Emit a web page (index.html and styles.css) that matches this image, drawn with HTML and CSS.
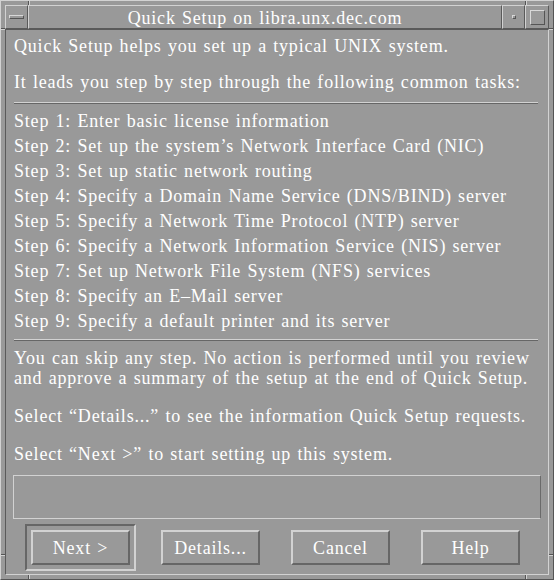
FILE: index.html
```html
<!DOCTYPE html>
<html>
<head>
<meta charset="utf-8">
<title>Quick Setup</title>
<link rel="stylesheet" href="styles.css">
</head>
<body>
<div class="window">
  <span class="tick tick-top tick-l"></span>
  <span class="tick tick-top tick-r"></span>
  <span class="tick tick-bottom tick-l"></span>
  <span class="tick tick-bottom tick-r"></span>
  <span class="tick tick-left tick-t"></span>
  <span class="tick tick-left tick-b"></span>
  <span class="tick tick-right tick-t"></span>
  <span class="tick tick-right tick-b"></span>

  <div class="titlebar">
    <div class="tb-btn tb-menu"><span class="menu-glyph"></span></div>
    <div class="tb-title">Quick Setup on libra.unx.dec.com</div>
    <div class="tb-btn tb-min"><span class="min-glyph"></span></div>
    <div class="tb-btn tb-max"><span class="max-glyph"></span></div>
  </div>

  <div class="content">
    <p class="line intro">Quick Setup helps you set up a typical UNIX system.</p>
    <p class="line lead">It leads you step by step through the following common tasks:</p>
    <div class="sep sep-1"></div>
    <ul class="steps">
      <li>Step 1: Enter basic license information</li>
      <li>Step 2: Set up the system’s Network Interface Card (NIC)</li>
      <li>Step 3: Set up static network routing</li>
      <li>Step 4: Specify a Domain Name Service (DNS/BIND) server</li>
      <li>Step 5: Specify a Network Time Protocol (NTP) server</li>
      <li>Step 6: Specify a Network Information Service (NIS) server</li>
      <li>Step 7: Set up Network File System (NFS) services</li>
      <li>Step 8: Specify an E–Mail server</li>
      <li>Step 9: Specify a default printer and its server</li>
    </ul>
    <div class="sep sep-2"></div>
    <p class="line skip">You can skip any step. No action is performed until you review<br>and approve a summary of the setup at the end of Quick Setup.</p>
    <p class="line details">Select “Details...” to see the information Quick Setup requests.</p>
    <p class="line next">Select “Next &gt;” to start setting up this system.</p>
    <div class="status"></div>
    <div class="buttons">
      <div class="default-frame"><button class="btn">Next &gt;</button></div>
      <button class="btn">Details...</button>
      <button class="btn">Cancel</button>
      <button class="btn">Help</button>
    </div>
  </div>
</div>
</body>
</html>
```
FILE: styles.css
```css
html, body {
  margin: 0;
  padding: 0;
  background: #999999;
}

.window {
  position: relative;
  box-sizing: border-box;
  width: 554px;
  height: 580px;
  padding: 4px;
  background: #999999;
  border: 1px solid;
  border-color: #d2d2d2 #555555 #555555 #d2d2d2;
  display: flex;
  flex-direction: column;
  font-family: "Liberation Serif", "DejaVu Serif", serif;
  font-size: 18px;
  letter-spacing: 0.8px;
  word-spacing: 1px;
  color: #ffffff;
}

.tick {
  position: absolute;
  background: #555555;
}
.tick-top, .tick-bottom { width: 1px; height: 4px; }
.tick-top { top: 0; }
.tick-bottom { bottom: 0; }
.tick-top.tick-l, .tick-bottom.tick-l { left: 27px; box-shadow: 1px 0 0 #d2d2d2; }
.tick-top.tick-r, .tick-bottom.tick-r { left: 524px; box-shadow: 1px 0 0 #d2d2d2; }
.tick-left, .tick-right { height: 1px; width: 4px; }
.tick-left { left: 0; }
.tick-right { right: 0; }
.tick-left.tick-t, .tick-right.tick-t { top: 27px; box-shadow: 0 1px 0 #d2d2d2; }
.tick-left.tick-b, .tick-right.tick-b { top: 553px; box-shadow: 0 1px 0 #d2d2d2; }

.titlebar {
  display: flex;
  height: 24px;
  flex: none;
}

.tb-btn, .tb-title {
  box-sizing: border-box;
  height: 24px;
  border: 1px solid;
  border-color: #d2d2d2 #5a5a5a #5a5a5a #d2d2d2;
  display: flex;
  align-items: center;
  justify-content: center;
}

.tb-menu { width: 23px; }
.tb-title {
  flex: 1;
  font-size: 18px;
  line-height: 20px;
  padding-top: 1px;
}
.tb-min { width: 23px; }
.tb-max { width: 24px; }

.menu-glyph {
  box-sizing: border-box;
  width: 15px;
  height: 4px;
  border: 1px solid;
  border-color: #d8d8d8 #555555 #555555 #d8d8d8;
}

.min-glyph {
  box-sizing: border-box;
  width: 4px;
  height: 4px;
  border: 1px solid;
  border-color: #d8d8d8 #555555 #555555 #d8d8d8;
}

.max-glyph {
  box-sizing: border-box;
  width: 15px;
  height: 15px;
  border: 1px solid;
  border-color: #d8d8d8 #555555 #555555 #d8d8d8;
}

.content {
  flex: 1;
  box-sizing: border-box;
  border: 1px solid;
  border-color: #5a5a5a #d2d2d2 #d2d2d2 #5a5a5a;
  padding: 6px 0 0 8px;
  display: flex;
  flex-direction: column;
}

.line {
  margin: 0;
  line-height: 20px;
  white-space: nowrap;
}

.lead { margin-top: 16px; }

.sep {
  height: 1px;
  background: #d2d2d2;
  border-bottom: 1px solid #666666;
  margin-right: 10px;
  flex: none;
}
.sep-1 { margin-top: 10px; }
.sep-2 { margin-top: 5px; }

.steps {
  list-style: none;
  margin: 5px 0 0 0;
  padding: 0;
}
.steps li {
  line-height: 25px;
  height: 25px;
  white-space: nowrap;
}

.skip { margin-top: 7px; }
.details { margin-top: 18px; }
.next { margin-top: 18px; }

.status {
  box-sizing: border-box;
  height: 44px;
  margin: 11px 7px 0 -1px;
  border: 1px solid;
  border-color: #d2d2d2 #6a6a6a #d2d2d2 #d2d2d2;
  flex: none;
}

.buttons {
  display: flex;
  align-items: center;
  margin-top: 5px;
  margin-left: 11px;
  gap: 31px;
}

.default-frame {
  box-sizing: border-box;
  width: 111px;
  height: 47px;
  border: 2px solid;
  border-color: #666666 #d2d2d2 #d2d2d2 #666666;
  display: flex;
  align-items: center;
  justify-content: center;
  margin-right: -6px;
}

.btn {
  box-sizing: border-box;
  width: 99px;
  height: 35px;
  margin: 0;
  padding: 0;
  background: #999999;
  border: 2px solid;
  border-color: #d2d2d2 #666666 #666666 #d2d2d2;
  font-family: "Liberation Serif", "DejaVu Serif", serif;
  font-size: 18px;
  letter-spacing: 0.8px;
  word-spacing: 1px;
  color: #ffffff;
  line-height: 20px;
}
```
